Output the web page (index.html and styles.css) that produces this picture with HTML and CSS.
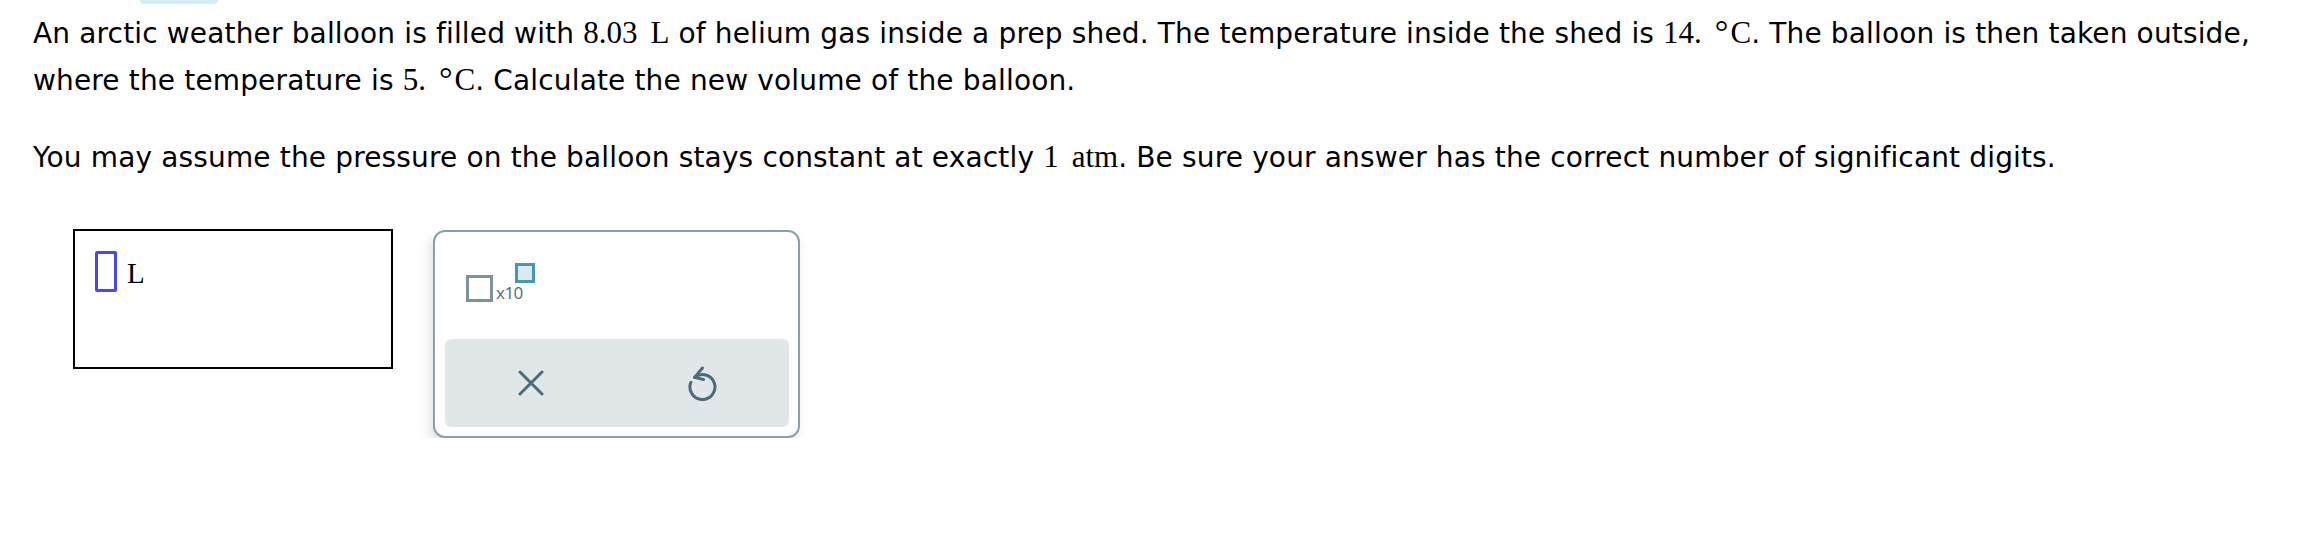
FILE: index.html
```html
<!DOCTYPE html>
<html lang="en">
<head>
<meta charset="utf-8">
<title>Question</title>
<link rel="stylesheet" href="styles.css">
</head>
<body>
<div class="tab-pill"></div>
<div class="question">
  <p>An arctic weather balloon is filled with <span class="m">8.03<span class="sp"></span>L</span> of helium gas inside a prep shed. The temperature inside the shed is <span class="m">14.<span class="sp"></span><span class="deg">°</span>C</span>. The balloon is then taken outside, where the temperature is <span class="m">5.<span class="sp"></span><span class="deg">°</span>C</span>. Calculate the new volume of the balloon.</p>
  <p>You may assume the pressure on the balloon stays constant at exactly <span class="m">1<span class="sp"></span>atm</span>. Be sure your answer has the correct number of significant digits.</p>
</div>
<div class="answer-row">
  <div class="answer-box">
    <span class="slot"></span>
    <span class="unit">L</span>
  </div>
  <div class="palette">
    <div class="pal-top">
      <div class="sci">
        <span class="sci-base"></span>
        <span class="sci-x">x10</span>
        <span class="sci-exp"></span>
      </div>
    </div>
    <div class="pal-actions">
      <div class="pal-btn">
        <svg width="26" height="26" viewBox="0 0 26 26" aria-hidden="true">
          <path d="M2 2 L24 24 M24 2 L2 24" stroke="#4b6b78" stroke-width="3" stroke-linecap="round" fill="none"/>
        </svg>
      </div>
      <div class="pal-btn">
        <svg width="30" height="36" viewBox="0 0 30 36" aria-hidden="true">
          <path d="M6.5 12.4 A12.5 12.5 0 1 1 2.9 17.3" stroke="#4b6b78" stroke-width="3" stroke-linecap="round" fill="none"/>
          <path d="M14.5 3 L6.5 12.4 L15.5 14.5" stroke="#4b6b78" stroke-width="3" stroke-linecap="round" stroke-linejoin="round" fill="none"/>
        </svg>
      </div>
    </div>
  </div>
</div>
</body>
</html>
```
FILE: styles.css
```css
html, body {
  margin: 0;
  padding: 0;
  background: #ffffff;
}

body {
  font-family: "DejaVu Sans", Verdana, sans-serif;
  color: #000000;
}

.tab-pill {
  margin-left: 140px;
  width: 78px;
  height: 4px;
  background: #d6ecf3;
  border-radius: 0 0 12px 12px;
}

.question {
  padding: 6px 10px 0 33px;
  font-size: 28px;
  line-height: 47px;
  letter-spacing: 0.15px;
}

.question p {
  margin: 0;
}

.question p + p {
  margin-top: 30px;
}

.m {
  font-family: "Liberation Serif", "Times New Roman", serif;
  font-size: 31px;
  line-height: 1;
  letter-spacing: 0;
}

.sp {
  display: inline-block;
  width: 13px;
}

.deg {
  display: inline-block;
  margin-right: 2px;
  font-size: 34px;
}

.answer-row {
  display: flex;
  align-items: flex-start;
  gap: 40px;
  margin-top: 48px;
  padding-left: 73px;
}

.answer-box {
  box-sizing: border-box;
  width: 320px;
  height: 140px;
  border: 2px solid #000000;
  padding: 20px 0 0 20px;
  display: flex;
  align-items: flex-start;
}

.slot {
  box-sizing: border-box;
  width: 22px;
  height: 41px;
  border: 3px solid #4646ff;
  border-radius: 2px;
}

.unit {
  font-family: "Liberation Serif", "Times New Roman", serif;
  font-size: 29px;
  line-height: 29px;
  margin-left: 10px;
  margin-top: 8px;
}

.palette {
  box-sizing: border-box;
  width: 367px;
  height: 208px;
  margin-top: 1px;
  border: 2px solid #8a9fa8;
  border-radius: 12px;
  padding: 0 9px 9px 10px;
  background: #ffffff;
  box-shadow: -3px 6px 12px rgba(40, 60, 70, 0.16);
  display: flex;
  flex-direction: column;
}

.pal-top {
  height: 107px;
  padding: 31px 0 0 21px;
  box-sizing: border-box;
}

.sci {
  display: flex;
  align-items: flex-end;
  height: 39px;
}

.sci-base {
  box-sizing: border-box;
  width: 27px;
  height: 27px;
  border: 3px solid #7d939c;
}

.sci-x {
  font-family: "Open Sans", "Liberation Sans", sans-serif;
  font-size: 17px;
  line-height: 17px;
  color: #4f6b77;
  margin-left: 3px;
  margin-bottom: 1px;
  letter-spacing: -0.5px;
}

.sci-exp {
  box-sizing: border-box;
  align-self: flex-start;
  width: 20px;
  height: 20px;
  margin-left: -8px;
  border: 3px solid #4599b1;
  background: #d6ecf2;
}

.pal-actions {
  flex: 1;
  display: grid;
  grid-template-columns: 1fr 1fr;
  background: #e1e6e9;
  border-radius: 6px;
}

.pal-btn {
  display: flex;
  align-items: center;
  justify-content: center;
}
```
